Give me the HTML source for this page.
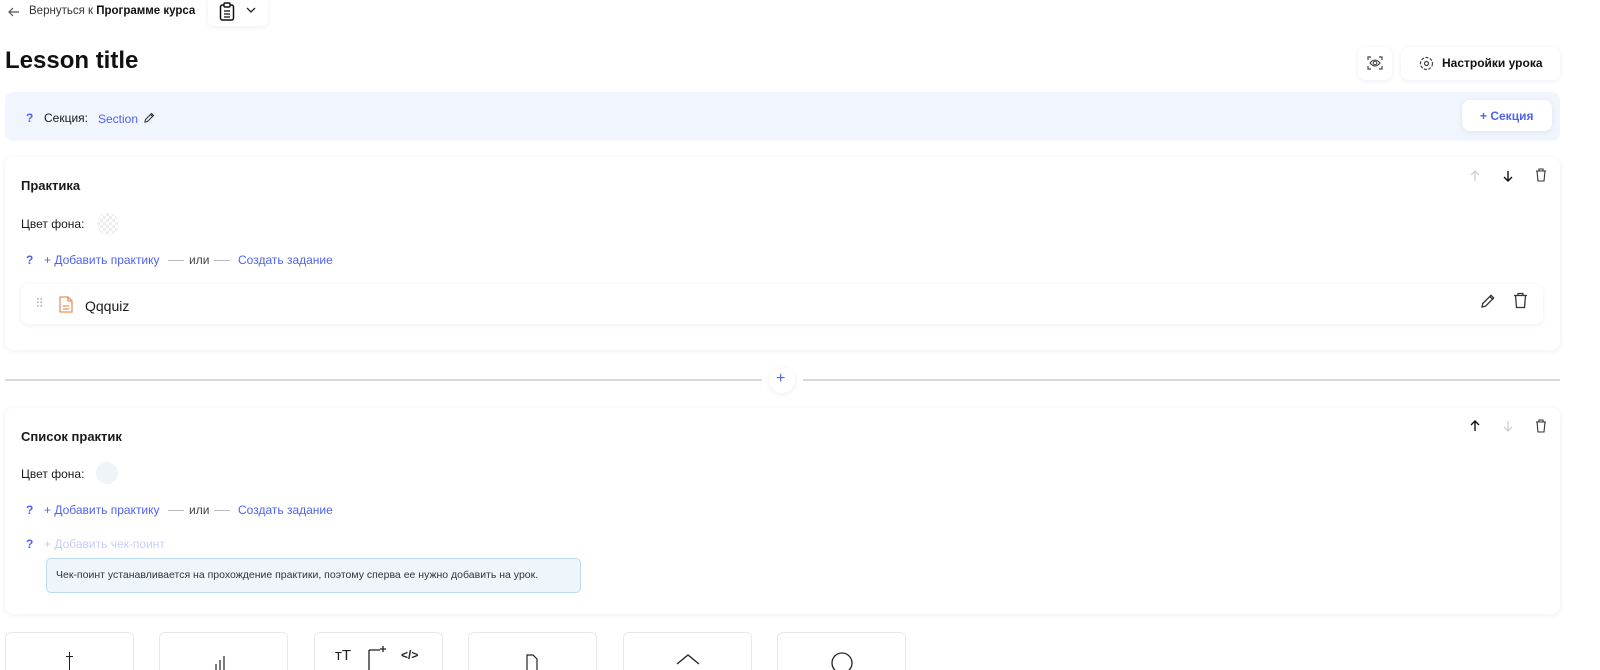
<!DOCTYPE html>
<html><head><meta charset="utf-8">
<style>
*{box-sizing:border-box;margin:0;padding:0}
html,body{width:1600px;height:670px;overflow:hidden}
body{background:#fff;font-family:"Liberation Sans","DejaVu Sans",sans-serif;color:#1a1a1a;position:relative}
.a{position:absolute}
.card{position:absolute;background:#fff;border-radius:8px;box-shadow:0 1px 6px rgba(30,40,80,.08)}
.blue{color:#4f63f0}
.t12{font-size:12px}
svg{display:block}
.tile{position:absolute;top:632px;width:129px;height:38px;border:1px solid #e6e8ef;border-bottom:none;border-radius:6px 6px 0 0;background:#fff}
</style></head><body>
<svg class="a" style="left:8px;top:7px" width="12" height="10" viewBox="0 0 12 10"><path d="M11 5H1M5 1L1 5l4 4" stroke="#555" stroke-width="1.2" fill="none"/></svg>
<div class="a" style="left:29px;top:5px;font-size:11.5px;color:#333">Вернуться к <b style="color:#111">Программе курса</b></div>
<div class="card" style="left:208px;top:-4px;width:60px;height:30px;border-radius:6px"></div>
<svg class="a" style="left:219px;top:2px" width="16" height="19" viewBox="0 0 16 19"><rect x="1.5" y="3" width="13" height="15" rx="2" stroke="#111" stroke-width="1.5" fill="none"/><rect x="5" y="1" width="6" height="4" rx="1" stroke="#111" stroke-width="1.4" fill="#fff"/><path d="M5 9h6M5 12h6M5 15h6" stroke="#111" stroke-width="1.3"/></svg>
<svg class="a" style="left:246px;top:7px" width="10" height="7" viewBox="0 0 10 7"><path d="M1 1l4 4 4-4" stroke="#222" stroke-width="1.3" fill="none"/></svg>

<div class="a" style="left:5px;top:47px;font-size:24px;font-weight:700;color:#111">Lesson title</div>
<div class="card" style="left:1358px;top:47px;width:34px;height:33px"></div>
<svg class="a" style="left:1367px;top:55px" width="16" height="16" viewBox="0 0 16 16"><path d="M1 5V2h3M12 2h3v3M15 11v3h-3M4 14H1v-3" stroke="#444" stroke-width="1.2" fill="none"/><path d="M3 8q5-6 10 0q-5 6-10 0z" stroke="#444" stroke-width="1.1" fill="none"/><circle cx="8" cy="8" r="1.8" stroke="#444" stroke-width="1.1" fill="none"/></svg>
<div class="card" style="left:1401px;top:47px;width:159px;height:33px"></div>
<svg class="a" style="left:1419px;top:56px" width="15" height="15" viewBox="0 0 15 15"><circle cx="7.5" cy="7.5" r="6" stroke="#444" stroke-width="1.2" fill="none" stroke-dasharray="3 1.5"/><circle cx="7.5" cy="7.5" r="2" stroke="#444" stroke-width="1.2" fill="none"/></svg>
<div class="a" style="left:1442px;top:56px;font-size:12px;font-weight:700;color:#111">Настройки урока</div>

<div class="a" style="left:5px;top:92px;width:1555px;height:49px;background:#f0f5fe;border-radius:8px"></div>
<div class="a blue t12" style="left:26px;top:111px;font-weight:700">?</div>
<div class="a t12" style="left:44px;top:111px">Секция:</div>
<div class="a blue t12" style="left:98px;top:112px">Section</div>
<svg class="a" style="left:143px;top:112px" width="12" height="12" viewBox="0 0 12 12"><path d="M2 10l.5-2.5L8.5 1.5l2 2-6 6z M7.5 2.5l2 2" stroke="#333" stroke-width="1.1" fill="none"/></svg>
<div class="card" style="left:1462px;top:100px;width:90px;height:31px"></div>
<div class="a blue t12" style="left:1480px;top:109px;font-weight:700">+ Секция</div>

<div class="card" style="left:5px;top:157px;width:1555px;height:193px"></div>
<div class="a" style="left:21px;top:178px;font-size:13px;font-weight:700">Практика</div>
<svg class="a" style="left:1470px;top:170px" width="10" height="12" viewBox="0 0 10 12"><path d="M5 11V1M1 5l4-4 4 4" stroke="#ccc" stroke-width="1.2" fill="none"/></svg>
<svg class="a" style="left:1503px;top:170px" width="10" height="12" viewBox="0 0 10 12"><path d="M5 1v10M1 7l4 4 4-4" stroke="#111" stroke-width="1.4" fill="none"/></svg>
<svg class="a" style="left:1535px;top:168px" width="12" height="14" viewBox="0 0 12 14"><path d="M1 3h10M4 3V1h4v2M2 3l1 10h6l1-10" stroke="#333" stroke-width="1.1" fill="none"/></svg>
<div class="a t12" style="left:21px;top:217px">Цвет фона:</div>
<div class="a" style="left:97px;top:213px;width:22px;height:22px;border-radius:50%;background:repeating-conic-gradient(#eee 0 25%,#fff 0 50%) 0 0/6px 6px"></div>
<div class="a blue t12" style="left:26px;top:253px;font-weight:700">?</div>
<div class="a blue t12" style="left:44px;top:253px">+ Добавить практику</div>
<div class="a" style="left:168px;top:260px;width:16px;height:1px;background:#bbb"></div>
<div class="a t12" style="left:189px;top:253px;color:#444">или</div>
<div class="a" style="left:214px;top:260px;width:16px;height:1px;background:#bbb"></div>
<div class="a blue t12" style="left:238px;top:253px">Создать задание</div>
<div class="card" style="left:21px;top:284px;width:1522px;height:40px"></div>
<div class="a" style="left:36px;top:297px;width:7px;height:10px;background:radial-gradient(circle,#aaa 0.8px,transparent 1px) 0 0/3.5px 3.5px"></div>
<svg class="a" style="left:59px;top:296px" width="14" height="17" viewBox="0 0 14 17"><path d="M1 1h8l4 4v11H1z M9 1v4h4 M4 10h6M4 13h6" stroke="#e8935a" stroke-width="1.3" fill="none"/></svg>
<div class="a" style="left:85px;top:298px;font-size:14px">Qqquiz</div>
<svg class="a" style="left:1480px;top:293px" width="16" height="16" viewBox="0 0 16 16"><path d="M2 14l.8-3.5L11 2.3l2.7 2.7-8.2 8.2z M9.8 3.5l2.7 2.7" stroke="#333" stroke-width="1.3" fill="none"/></svg>
<svg class="a" style="left:1513px;top:292px" width="15" height="17" viewBox="0 0 15 17"><path d="M1 3.5h13M5 3.5V1.5h5v2M2.5 3.5l1 12h8l1-12" stroke="#333" stroke-width="1.3" fill="none"/></svg>

<div class="a" style="left:5px;top:379px;width:757px;height:2px;background:#d8d8dc"></div>
<div class="a" style="left:803px;top:379px;width:757px;height:2px;background:#d8d8dc"></div>
<div class="card" style="left:769px;top:367px;width:26px;height:26px;border-radius:50%"></div>
<div class="a blue" style="left:776px;top:370px;font-size:16px">+</div>

<div class="card" style="left:5px;top:408px;width:1555px;height:206px"></div>
<div class="a" style="left:21px;top:429px;font-size:13px;font-weight:700">Список практик</div>
<svg class="a" style="left:1470px;top:420px" width="10" height="12" viewBox="0 0 10 12"><path d="M5 11V1M1 5l4-4 4 4" stroke="#111" stroke-width="1.4" fill="none"/></svg>
<svg class="a" style="left:1503px;top:420px" width="10" height="12" viewBox="0 0 10 12"><path d="M5 1v10M1 7l4 4 4-4" stroke="#ccc" stroke-width="1.2" fill="none"/></svg>
<svg class="a" style="left:1535px;top:419px" width="12" height="14" viewBox="0 0 12 14"><path d="M1 3h10M4 3V1h4v2M2 3l1 10h6l1-10" stroke="#333" stroke-width="1.1" fill="none"/></svg>
<div class="a t12" style="left:21px;top:467px">Цвет фона:</div>
<div class="a" style="left:96px;top:462px;width:22px;height:22px;border-radius:50%;background:#eef4f8"></div>
<div class="a blue t12" style="left:26px;top:503px;font-weight:700">?</div>
<div class="a blue t12" style="left:44px;top:503px">+ Добавить практику</div>
<div class="a" style="left:168px;top:510px;width:16px;height:1px;background:#bbb"></div>
<div class="a t12" style="left:189px;top:503px;color:#444">или</div>
<div class="a" style="left:214px;top:510px;width:16px;height:1px;background:#bbb"></div>
<div class="a blue t12" style="left:238px;top:503px">Создать задание</div>
<div class="a blue t12" style="left:26px;top:537px;font-weight:700">?</div>
<div class="a t12" style="left:44px;top:537px;color:#c8cef8">+ Добавить чек-поинт</div>
<div class="a" style="left:46px;top:558px;width:535px;height:35px;background:#eef6fb;border:1px solid #b9dcf2;border-radius:5px"></div>
<div class="a" style="left:56px;top:569px;font-size:10.5px;color:#333">Чек-поинт устанавливается на прохождение практики, поэтому сперва ее нужно добавить на урок.</div>

<div class="tile" style="left:5px"></div>
<div class="tile" style="left:159px"></div>
<div class="tile" style="left:314px"></div>
<div class="tile" style="left:468px"></div>
<div class="tile" style="left:623px"></div>
<div class="tile" style="left:777px"></div>
<div class="a" style="left:69px;top:652px;width:1px;height:18px;background:#222"></div><div class="a" style="left:66px;top:656px;width:7px;height:1px;background:#222"></div>
<svg class="a" style="left:214px;top:652px" width="14" height="18"><path d="M2 18V12M6 18V8M10 18V4" stroke="#222" stroke-width="1.2"/></svg>
<div class="a" style="left:335px;top:647px;font-size:15px;color:#222">ᴛT</div>
<svg class="a" style="left:368px;top:645px" width="20" height="25"><path d="M1 5h11M1 5v20" stroke="#222" stroke-width="1.3" fill="none"/><path d="M15 1v6M12 4h6" stroke="#222" stroke-width="1.3"/></svg>
<div class="a" style="left:401px;top:648px;font-size:12px;font-weight:700;color:#222">&lt;/&gt;</div>
<svg class="a" style="left:526px;top:654px" width="12" height="16"><path d="M1 16V1h6l4 4v11" stroke="#222" stroke-width="1.2" fill="none"/></svg>
<svg class="a" style="left:676px;top:652px" width="24" height="18"><path d="M1 12L12 3l11 9" stroke="#222" stroke-width="1.3" fill="none"/></svg>
<svg class="a" style="left:830px;top:651px" width="24" height="19"><circle cx="12" cy="12" r="10" stroke="#222" stroke-width="1.3" fill="none"/></svg>
</body></html>
